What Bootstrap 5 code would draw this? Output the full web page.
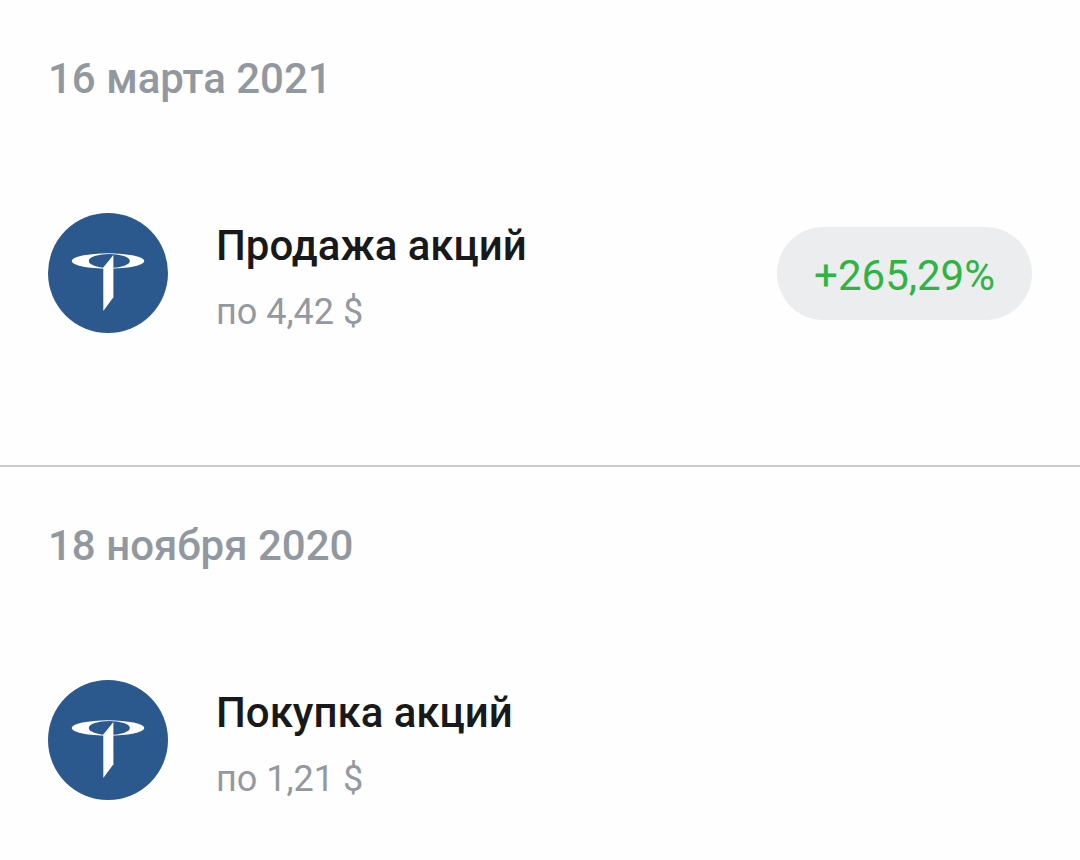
<!DOCTYPE html>
<html lang="ru">
<head>
<meta charset="utf-8">
<meta name="viewport" content="width=device-width, initial-scale=1">
<title>История операций</title>
<link href="https://cdn.jsdelivr.net/npm/bootstrap@5.3.0/dist/css/bootstrap.min.css" rel="stylesheet">
<style>
  body { font-family: Roboto, "Noto Sans", sans-serif; color: #18191b; background: #fefefe; }
  .day { padding: 53px 48px 132px; }
  .day + .day { border-top: 2px solid #c9cccd; }
  .day-title { font-size: 42px; line-height: 52px; font-weight: 500; color: #9298a0; margin-bottom: 108px; }
  .deal { gap: 48px; }
  .deal-logo { width: 120px; height: 120px; }
  .deal-name { font-size: 42px; line-height: 50px; font-weight: 500; margin-bottom: 20px; }
  .deal-price { font-size: 36px; line-height: 42px; color: #93999e; }
  .deal-gain { font-size: 42px; line-height: 48px; padding: 25px 37px 20px; background: #ebedee; color: #2fb343; }
</style>
</head>
<body>
<svg class="d-none" aria-hidden="true">
  <symbol id="logo" viewBox="0 0 120 120">
    <circle cx="60" cy="60" r="60" fill="#2b588d"/>
    <ellipse cx="60" cy="48" rx="36.3" ry="7.7" fill="#fff"/>
    <ellipse cx="61.3" cy="48" rx="20.5" ry="6.9" fill="#2b588d"/>
    <path d="M55.3 54.5L65.4 42V84.3L55.3 98Z" fill="#fff"/>
  </symbol>
</svg>
<main>
  <section class="day">
    <h2 class="day-title">16 марта 2021</h2>
    <div class="deal d-flex align-items-center">
      <svg class="deal-logo flex-shrink-0" aria-hidden="true"><use href="#logo"/></svg>
      <div class="flex-grow-1 pt-2">
        <div class="deal-name">Продажа акций</div>
        <div class="deal-price">по 4,42 $</div>
      </div>
      <span class="deal-gain rounded-pill">+265,29%</span>
    </div>
  </section>
  <section class="day pb-5">
    <h2 class="day-title">18 ноября 2020</h2>
    <div class="deal d-flex align-items-center">
      <svg class="deal-logo flex-shrink-0" aria-hidden="true"><use href="#logo"/></svg>
      <div class="flex-grow-1 pt-2">
        <div class="deal-name">Покупка акций</div>
        <div class="deal-price">по 1,21 $</div>
      </div>
    </div>
  </section>
</main>
<script src="https://cdn.jsdelivr.net/npm/bootstrap@5.3.0/dist/js/bootstrap.bundle.min.js"></script>
</body>
</html>
